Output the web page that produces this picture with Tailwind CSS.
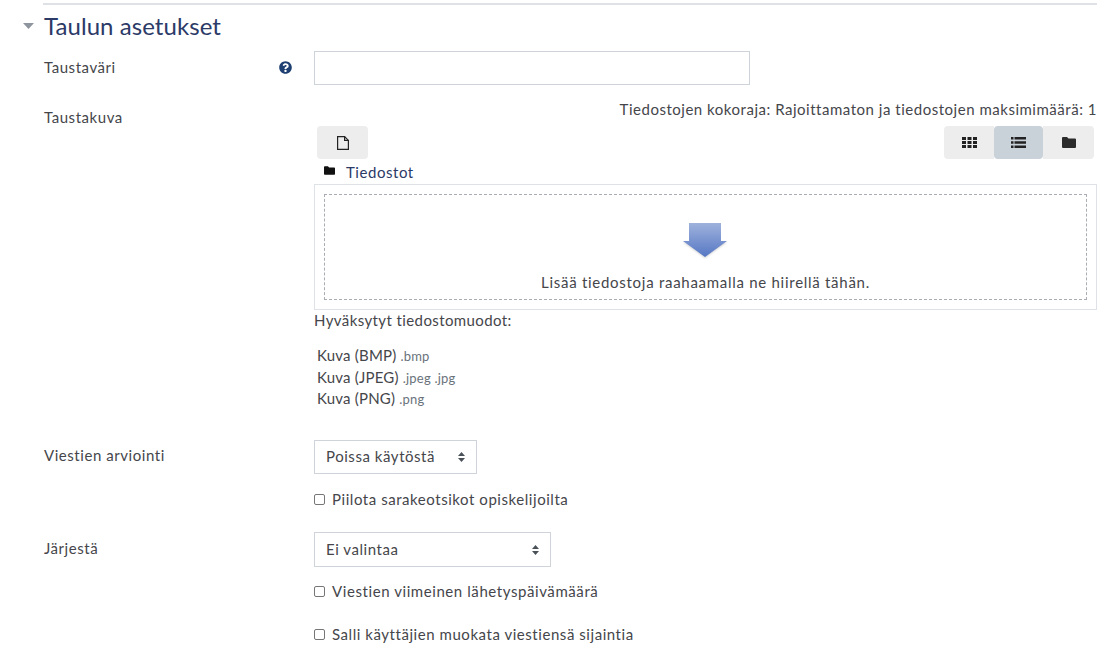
<!DOCTYPE html>
<html lang="en">
<head>
    <meta charset="UTF-8">
    <title>Taulun asetukset</title>
    <script src="https://cdn.jsdelivr.net/npm/@tailwindcss/browser@4"></script>
</head>
<body class="bg-white h-[652px] overflow-hidden font-['Lato',sans-serif] text-[15px] leading-[22px] tracking-[0.55px] text-[#45464b]">
    <div class="ml-[43px] w-[1054px] h-[5px] border-b-2 border-[#dee2e6]"></div>

    <!-- Section header -->
    <div class="flex items-center h-[34px] mt-[4px] ml-[23px]">
        <svg class="w-[11px] h-[6px] mr-[10px]" viewBox="0 0 11 6"><path d="M0 0h11L5.500 6z" fill="#8f959e"/></svg>
        <h3 class="text-[24px] leading-[34px] tracking-[0.06px] text-[#2b3a67]">Taulun asetukset</h3>
    </div>

    <div class="ml-[43px] w-[1054px]">
        <!-- Taustaväri -->
        <div class="flex mt-[8px]">
            <div class="w-[271px] flex justify-between pl-[1px] pr-[22px] pt-[5px]">
                <span>Taustaväri</span>
                <svg class="w-[13px] h-[13px] mt-[5px]" viewBox="0 0 512 512"><path fill="#1d3f72" d="M504 256c0 137-111 248-248 248S8 393 8 256 119 8 256 8s248 111 248 248zM263 90c-55 0-90 23-117 64-4 5-3 12 3 16l35 26c5 4 13 3 17-2 18-23 30-36 58-36 21 0 46 13 46 33 0 15-12 23-33 34-24 14-55 31-55 73v4c0 7 5 12 12 12h56c7 0 12-5 12-12v-1c0-29 85-30 85-109 0-59-61-102-119-102zm-7 254c-26 0-47 21-47 47s21 47 47 47 47-21 47-47-21-47-47-47z"/></svg>
            </div>
            <div class="w-[436px] h-[34px] border border-[#ced4da]"></div>
        </div>

        <!-- Taustakuva -->
        <div class="flex mt-[13px]">
            <div class="w-[271px] pl-[1px] pt-[8px]">Taustakuva</div>
            <div class="w-[783px]">
                <div class="text-right tracking-[0.52px]">Tiedostojen kokoraja: Rajoittamaton ja tiedostojen maksimimäärä: 1</div>
                <div class="flex justify-between items-start mt-[6px] pl-[3px] pr-[3px]">
                    <div class="w-[51px] h-[33px] bg-[#ededed] rounded-[4px] flex items-center justify-center">
                        <svg class="w-[12px] h-[14px]" viewBox="0 0 12 14" fill="none" stroke="#222" stroke-width="1.200"><path d="M.6.6h7l3.800 3.800v9H.6z"/><path d="M7.600.6v3.800h3.800"/></svg>
                    </div>
                    <div class="flex">
                        <div class="w-[50px] h-[33px] bg-[#ededed] rounded-l-[4px] flex items-center justify-center">
                            <svg class="w-[15px] h-[11px]" viewBox="0 0 15 11" fill="#222"><path d="M0 0h4v3H0zM5.500 0h4v3h-4zM11 0h4v3h-4zM0 4h4v3H0zM5.500 4h4v3h-4zM11 4h4v3h-4zM0 8h4v3H0zM5.500 8h4v3h-4zM11 8h4v3h-4z"/></svg>
                        </div>
                        <div class="w-[49px] h-[33px] bg-[#c9d1d9] rounded-[4px] flex items-center justify-center">
                            <svg class="w-[15px] h-[11px]" viewBox="0 0 15 11" fill="#222"><path d="M0 0h2.500v2.500H0zM3.500 0H15v2.500H3.500zM0 4.200h2.500v2.500H0zM3.500 4.200H15v2.500H3.500zM0 8.500h2.500V11H0zM3.500 8.500H15V11H3.500z"/></svg>
                        </div>
                        <div class="w-[51px] h-[33px] bg-[#ededed] rounded-r-[4px] flex items-center justify-center">
                            <svg class="w-[14px] h-[11px]" viewBox="0 0 14 11" fill="#2b2b2b"><path d="M1 0h4l1.500 1.600H13a1 1 0 0 1 1 1V10a1 1 0 0 1-1 1H1a1 1 0 0 1-1-1V1a1 1 0 0 1 1-1z"/></svg>
                        </div>
                    </div>
                </div>
                <div class="flex items-center h-[24px] mt-[1px] pl-[10px]">
                    <svg class="w-[11px] h-[9px] mb-[3px]" viewBox="0 0 14 11" fill="#111"><path d="M1 0h4l1.500 1.600H13a1 1 0 0 1 1 1V10a1 1 0 0 1-1 1H1a1 1 0 0 1-1-1V1a1 1 0 0 1 1-1z"/></svg>
                    <span class="ml-[11px] text-[#2b3a67]">Tiedostot</span>
                </div>
                <!-- Drop zone -->
                <div class="h-[126px] border border-[#dee2e6] p-[9px]">
                    <div class="h-full border border-dashed border-[#a9adb3] flex flex-col items-center pt-[27px]">
                        <svg class="w-[46px] h-[38px] mr-[1px]" viewBox="0 0 46 38">
                            <defs>
                                <linearGradient id="arrowFill" x1="0" y1="0" x2="0" y2="1">
                                    <stop offset="0" stop-color="#9eb2dc"/>
                                    <stop offset="1" stop-color="#5677c4"/>
                                </linearGradient>
                                <filter id="arrowShadow" x="-20%" y="-20%" width="140%" height="150%">
                                    <feGaussianBlur stdDeviation="1.200"/>
                                </filter>
                            </defs>
                            <path d="M7 20h32l6 0L23 36 1 20z" fill="#000" opacity=".18" filter="url(#arrowShadow)"/>
                            <path d="M7 1h32v18h6L23 35 1 19h6z" fill="url(#arrowFill)"/>
                        </svg>
                        <div class="mt-[11px] tracking-[0.72px]">Lisää tiedostoja raahaamalla ne hiirellä tähän.</div>
                    </div>
                </div>
                <div class="h-[22px] -mt-[1px] tracking-[0.4px]">Hyväksytyt tiedostomuodot:</div>
                <ul class="mt-[13px] pl-[3px] tracking-[0.2px]">
                    <li class="h-[22px]">Kuva (BMP) <span class="text-[13px] text-[#6a737b]">.bmp</span></li>
                    <li class="h-[21px]">Kuva (JPEG) <span class="text-[13px] text-[#6a737b]">.jpeg .jpg</span></li>
                    <li class="h-[21px]">Kuva (PNG) <span class="text-[13px] text-[#6a737b]">.png</span></li>
                </ul>
            </div>
        </div>

        <!-- Viestien arviointi -->
        <div class="flex mt-[32px]">
            <div class="w-[271px] pl-[1px] pt-[4px]">Viestien arviointi</div>
            <div>
                <div class="w-[163px] h-[34px] border border-[#ced4da] flex items-center justify-between pl-[11px] pr-[11px]">
                    <span class="-mt-[2px]">Poissa käytöstä</span>
                    <svg class="w-[7px] h-[10px]" viewBox="0 0 7 10" fill="#495057"><path d="M3.500 0 7 4H0zM3.500 10 0 6h7z"/></svg>
                </div>
                <label class="flex items-center mt-[14px] h-[22px]">
                    <span class="w-[11px] h-[11px] border border-[#767676] rounded-[2px] mr-[7px]"></span>
                    <span class="-mt-[1px]">Piilota sarakeotsikot opiskelijoilta</span>
                </label>
            </div>
        </div>

        <!-- Järjestä -->
        <div class="flex mt-[22px]">
            <div class="w-[271px] pl-[1px] pt-[5px]">Järjestä</div>
            <div>
                <div class="w-[237px] h-[35px] border border-[#ced4da] flex items-center justify-between pl-[11px] pr-[11px]">
                    <span class="-mt-[2px]">Ei valintaa</span>
                    <svg class="w-[7px] h-[10px]" viewBox="0 0 7 10" fill="#495057"><path d="M3.500 0 7 4H0zM3.500 10 0 6h7z"/></svg>
                </div>
                <label class="flex items-center mt-[13px] h-[22px]">
                    <span class="w-[11px] h-[11px] border border-[#767676] rounded-[2px] mr-[7px]"></span>
                    <span class="tracking-[0.58px]">Viestien viimeinen lähetyspäivämäärä</span>
                </label>
                <label class="flex items-center mt-[21px] h-[22px]">
                    <span class="w-[11px] h-[11px] border border-[#767676] rounded-[2px] mr-[7px]"></span>
                    <span>Salli käyttäjien muokata viestiensä sijaintia</span>
                </label>
            </div>
        </div>
    </div>
</body>
</html>
